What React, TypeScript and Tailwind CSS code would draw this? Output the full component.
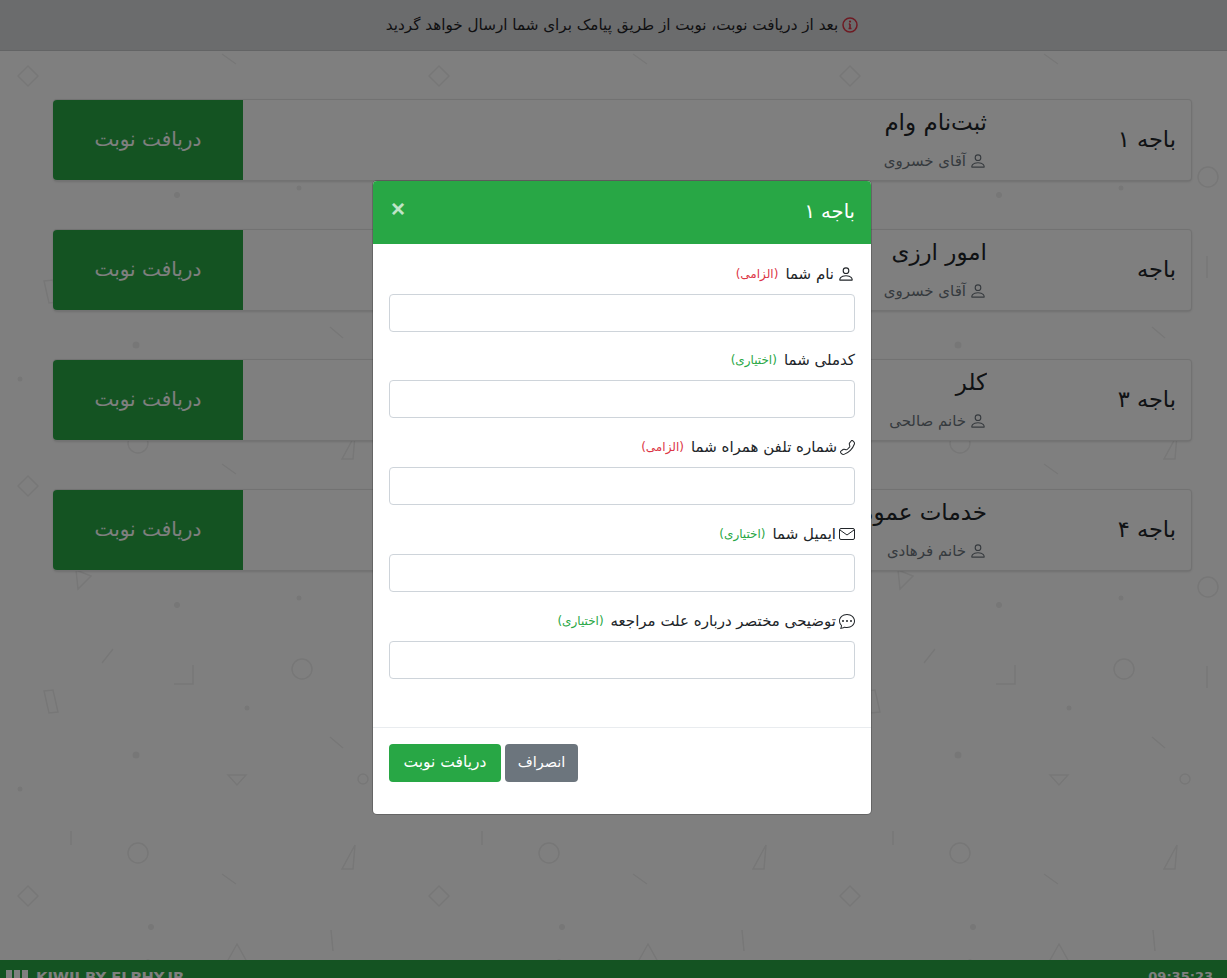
import React from 'react'
import { BsPerson, BsChatDots, BsTelephone } from 'react-icons/bs'

const counters = [
  { name: 'باجه ۱', title: 'ثبت‌نام وام', person: 'آقای خسروی' },
  { name: 'باجه', title: 'امور ارزی', person: 'آقای خسروی' },
  { name: 'باجه ۳', title: 'کلر', person: 'خانم صالحی' },
  { name: 'باجه ۴', title: 'خدمات عمومی', person: 'خانم فرهادی' },
]

const Doodles = () => (
  <svg className="absolute inset-0 h-full w-full" aria-hidden="true">
    <defs>
      <pattern id="doodle" width="411" height="410" patternUnits="userSpaceOnUse">
        <g fill="none" stroke="#eeeeee" strokeWidth="1.5">
          <path d="M28 66l10 10-10 10-10-10z" />
          <path d="M71 11v14" />
          <circle cx="138" cy="33" r="10" />
          <path d="M355 25l-13 24h11z" />
          <path d="M222 54l14 10" />
          <path d="M331 110l2 21" />
          <path d="M237 124l-10 18h20z" />
          <path d="M76 160l15 6-13 13z" />
          <circle cx="386" cy="177" r="10" />
          <path d="M102 253l11-14" />
          <path d="M193 255v19h-19" />
          <circle cx="302" cy="259" r="10" />
          <path d="M385 256v22" />
          <path d="M44 281l9-1 5 22-9 1z" />
          <path d="M330 327l13 11" />
          <path d="M228 365h18l-9 10z" />
          <circle cx="363" cy="369" r="5" />
        </g>
        <g fill="#eeeeee">
          <circle cx="151" cy="107" r="3" />
          <circle cx="177" cy="195" r="3" />
          <circle cx="299" cy="188" r="2.5" />
          <circle cx="247" cy="298" r="2.5" />
          <circle cx="136" cy="345" r="3.5" />
          <circle cx="20" cy="379" r="2.5" />
          <circle cx="148" cy="141" r="2" />
        </g>
      </pattern>
    </defs>
    <rect width="100%" height="100%" fill="url(#doodle)" />
  </svg>
)

const InfoIcon = () => (
  <svg viewBox="0 0 16 16" className="h-4 w-4 shrink-0 text-[#dc3545]" fill="none" stroke="currentColor">
    <circle cx="8" cy="8" r="7" strokeWidth="1.5" />
    <path d="M8 7v4.5M6.5 11.5h3M6.8 7H8" strokeWidth="1.6" />
    <circle cx="8" cy="4.6" r="1.1" fill="currentColor" stroke="none" />
  </svg>
)

const MailIcon = () => (
  <svg viewBox="0 0 16 16" className="h-4 w-4" fill="none" stroke="currentColor" strokeWidth="1">
    <rect x="0.5" y="2.5" width="15" height="11" rx="1.5" />
    <path d="M1 4l7 5 7-5" />
  </svg>
)

const Field = ({ label, icon, required, mb }: { label: string; icon?: React.ReactNode; required?: boolean; mb: string }) => (
  <div className={mb}>
    <label className="mb-[9px] flex h-[22px] items-center gap-[3px] text-[15px] leading-[22px] text-[#212529]">
      {icon}
      <span>{label}</span>
      <span className={`mr-1 text-[12px] ${required ? 'text-[#dc3545]' : 'text-[#28a745]'}`}>
        {required ? '(الزامی)' : '(اختیاری)'}
      </span>
    </label>
    <input className="block h-[38px] w-full rounded border border-[#ced4da] bg-white px-3" />
  </div>
)

export default function App() {
  return (
    <div
      dir="rtl"
      className="relative flex h-[978px] flex-col overflow-hidden bg-white font-['DejaVu_Sans',sans-serif]"
    >
      <Doodles />

      <div className="relative flex h-[51px] items-center justify-center gap-1 border-b border-[#c6c8ca] bg-[#d6d8db] pl-[17px] text-[15.2px] text-[#1f2225]">
        <InfoIcon />
        <span>بعد از دریافت نوبت، نوبت از طریق پیامک برای شما ارسال خواهد گردید</span>
      </div>

      <main className="relative flex flex-1 flex-col gap-[48px] pl-[53px] pr-[35px] pt-[48px]">
        {counters.map(c => (
          <div
            key={c.name + c.title}
            className="flex h-[82px] items-stretch rounded border border-black/10 bg-white shadow-sm"
          >
            <div className="flex w-[204px] shrink-0 items-center pr-[15px] text-[22.5px] text-[#212529]">{c.name}</div>
            <div className="flex flex-1 flex-col justify-center overflow-hidden pb-[3px]">
              <div className="text-[23px] leading-[32px] text-[#212529]">{c.title}</div>
              <div className="mt-[13px] flex h-[20px] items-center gap-[3px] text-[15px] text-[#6c757d]">
                <BsPerson className="h-[18px] w-[18px]" />
                <span>{c.person}</span>
              </div>
            </div>
            <button className="-ml-px w-[190px] shrink-0 rounded-l bg-[#28a745] pb-[3px] text-[20px] text-white">
              دریافت نوبت
            </button>
          </div>
        ))}
      </main>

      <footer
        dir="ltr"
        className="relative flex h-[18px] shrink-0 items-start justify-between bg-[#28a745] pl-[6px] pr-[14px] pt-[7px] text-[14.7px] font-bold leading-[20px] text-white"
      >
        <div className="flex items-start gap-2">
          <div className="mt-[3px] flex gap-[2px]">
            <span className="h-4 w-[6px] bg-white" />
            <span className="h-4 w-[6px] bg-white" />
            <span className="h-4 w-[6px] bg-white" />
          </div>
          <span>KIWII BY ELPHY.IR</span>
        </div>
        <span className="text-[13px]">09:35:23</span>
      </footer>

      <div className="absolute inset-0 bg-black/50" />

      <div className="absolute inset-0 flex items-start justify-center pl-[17px] pt-[181px]">
        <div className="w-[498px] overflow-hidden rounded bg-white ring-1 ring-black/20">
          <div className="flex h-[63px] items-start justify-between bg-[#28a745] px-4 pt-[17px] text-white">
            <h5 className="text-[19.5px] leading-[28px]">باجه ۱</h5>
            <button className="ml-[2px] mt-[-1px] font-['Liberation_Sans',sans-serif] text-[24px] font-bold leading-[24px] opacity-70">
              ×
            </button>
          </div>
          <div className="px-4 pb-[48px] pt-[19px]">
            <Field label="نام شما" icon={<BsPerson className="h-[18px] w-[18px]" />} required mb="mb-[17px]" />
            <Field label="کدملی شما" mb="mb-[18px]" />
            <Field
              label="شماره تلفن همراه شما"
              icon={<BsTelephone className="h-[15px] w-[15px] -scale-x-100" />}
              required
              mb="mb-[18px]"
            />
            <Field label="ایمیل شما" icon={<MailIcon />} mb="mb-[18px]" />
            <Field label="توضیحی مختصر درباره علت مراجعه" icon={<BsChatDots className="h-4 w-4" />} mb="" />
          </div>
          <div className="flex justify-end gap-1 border-t border-[#e9ecef] px-4 pb-[32px] pt-4">
            <button className="h-[38px] w-[73px] rounded bg-[#6c757d] text-[14.5px] font-medium text-white">انصراف</button>
            <button className="h-[38px] w-[112px] rounded bg-[#28a745] text-[15.5px] text-white">دریافت نوبت</button>
          </div>
        </div>
      </div>
    </div>
  )
}
